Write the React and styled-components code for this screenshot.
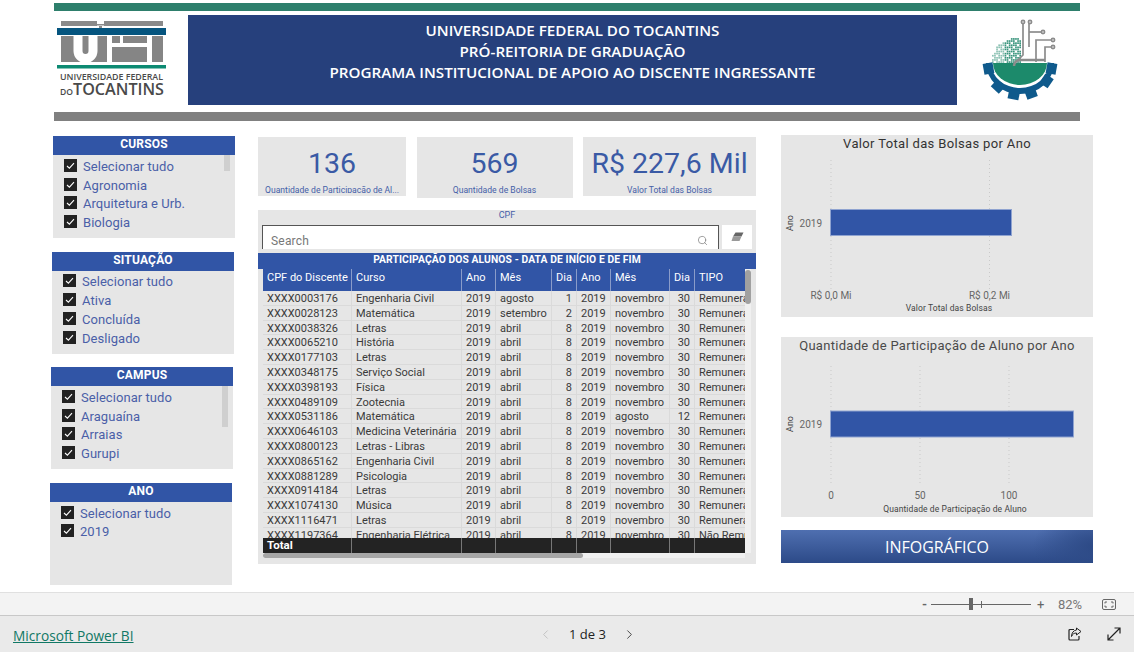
import React from "react";
import styled, { createGlobalStyle } from "styled-components";
import { ChevronLeft, ChevronRight, Search } from "lucide-react";

const BLUE = "#3155a6";
const PANEL = "#e6e6e6";

const rows = [
  ["XXXX0003176", "Engenharia Civil", "agosto", 1],
  ["XXXX0028123", "Matemática", "setembro", 2],
  ["XXXX0038326", "Letras"],
  ["XXXX0065210", "História"],
  ["XXXX0177103", "Letras"],
  ["XXXX0348175", "Serviço Social"],
  ["XXXX0398193", "Física"],
  ["XXXX0489109", "Zootecnia"],
  ["XXXX0531186", "Matemática", "abril", 8, "agosto", 12],
  ["XXXX0646103", "Medicina Veterinária"],
  ["XXXX0800123", "Letras - Libras"],
  ["XXXX0865162", "Engenharia Civil"],
  ["XXXX0881289", "Psicologia"],
  ["XXXX0914184", "Letras"],
  ["XXXX1074130", "Música"],
  ["XXXX1116471", "Letras"],
  ["XXXX1197364", "Engenharia Elétrica", "abril", 8, "novembro", 30, "Não Remunerada"],
];

const slicers = [
  { title: "CURSOS", offset: 3, items: ["Selecionar tudo", "Agronomia", "Arquitetura e Urb.", "Biologia"], thumb: { top: 19, left: 171, height: 16 } },
  { title: "SITUAÇÃO", offset: 2, items: ["Selecionar tudo", "Ativa", "Concluída", "Desligado"] },
  { title: "CAMPUS", offset: 1, items: ["Selecionar tudo", "Araguaína", "Arraias", "Gurupi"], thumb: { top: 19, left: 171, height: 41 } },
  { title: "ANO", offset: 0, items: ["Selecionar tudo", "2019"] },
];

const UftLogo = () => (
  <svg width="112" height="84" viewBox="56 18 112 84">
    <rect x="61" y="21" width="36" height="5" fill="#8a8a8a" />
    <rect x="104" y="21" width="59" height="5" fill="#8a8a8a" />
    <rect x="97" y="24" width="7" height="1.500" fill="#8a8a8a" />
    <rect x="99" y="26" width="3" height="2" fill="#8a8a8a" />
    <rect x="57" y="28" width="109" height="7" fill="#05557f" />
    <rect x="61" y="36" width="102" height="26" fill="#858585" />
    <path d="M78 36v15a7.500 7.500 0 0 0 15 0V36" fill="none" stroke="#fff" strokeWidth="9" />
    <rect x="107" y="36" width="5" height="26" fill="#fff" />
    <rect x="112" y="43" width="25" height="4" fill="#fff" />
    <rect x="120" y="36" width="3" height="7" fill="#fff" />
    <rect x="137" y="43" width="15" height="4" fill="#fff" />
    <rect x="147" y="36" width="5" height="26" fill="#fff" />
    <rect x="57" y="65" width="109" height="3.500" fill="#0c8a72" />
    <text x="60" y="80" fontFamily="Open Sans, sans-serif" fontSize="9" fontWeight="600" fill="#4a4a4a" textLength="103" lengthAdjust="spacingAndGlyphs">UNIVERSIDADE FEDERAL</text>
    <text x="60" y="95" fontFamily="Open Sans, sans-serif" fontSize="9" fontWeight="600" fill="#4a4a4a" textLength="13" lengthAdjust="spacingAndGlyphs">DO</text>
    <text x="73" y="95" fontFamily="Open Sans, sans-serif" fontSize="16.5" fontWeight="600" fill="#4a4a4a" textLength="91" lengthAdjust="spacingAndGlyphs">TOCANTINS</text>
  </svg>
);

const gearTeeth = [-80, -43, -11, 20, 56, 80];
const pixelDots = [];
for (let r = 0; r < 13; r++) {
  for (let c = 0; c < 14; c++) {
    const x = 992 + c * 2.1;
    const y = 36 + r * 2.1;
    const inside = (x - 1017) ** 2 + (y - 62) ** 2 < 26 * 26;
    if (inside && (r * 7 + c * 11) % 5 !== 0) pixelDots.push([x, y]);
  }
}

const SealLogo = () => (
  <svg width="90" height="90" viewBox="975 15 90 90">
    {pixelDots.map(([x, y], i) => (
      <rect key={i} x={x} y={y} width="1.700" height="1.700" fill="#2f8f76" opacity={x > 1004 ? 0.95 : 0.55} />
    ))}
    <path d="M986 63a34 31 0 0 0 68 0h-5a29 25 0 0 1-58 0z" fill="#0f5a8c" />
    {gearTeeth.map((a) => (
      <rect key={a} x="1014.500" y="90" width="11" height="10" fill="#0f5a8c" transform={`rotate(${-a} 1020 63)`} />
    ))}
    <path d="M993 63a27 22 0 0 0 54 0z" fill="#1c8a6b" />
    <g fill="none" stroke="#8c8c8c" strokeWidth="1.700">
      <path d="M1023 23v32l-5 5" />
      <path d="M1029 23v24" />
      <path d="M1029 32h14" />
      <path d="M1036 62V40h15" />
      <path d="M1045 62V47h6" />
      <path d="M1045 60h-25a6 6 0 0 0-6 6" strokeWidth="2.500" />
      <circle cx="1023" cy="22" r="1.600" fill="#fff" />
      <circle cx="1030" cy="22" r="1.600" fill="#fff" />
      <circle cx="1043" cy="32" r="1.600" fill="#fff" />
      <circle cx="1053" cy="40" r="1.600" fill="#fff" />
      <circle cx="1053" cy="47" r="1.600" fill="#fff" />
    </g>
  </svg>
);

const CheckMark = () => (
  <svg width="13" height="13" viewBox="0 0 13 13">
    <rect width="13" height="13" fill="#222" />
    <path d="M3 7l2.400 2.200L10 4.200" fill="none" stroke="#fff" strokeWidth="1.100" />
  </svg>
);

const Slicer = ({ title, items, offset, thumb }) => (
  <SlicerBox offset={offset}>
    <SlicerTitle>{title}</SlicerTitle>
    <SlicerList>
      {items.map((item) => (
        <SlicerItem key={item}>
          <CheckMark />
          <span>{item}</span>
        </SlicerItem>
      ))}
    </SlicerList>
    {thumb && <SlicerThumb $top={thumb.top} $left={thumb.left} $height={thumb.height} />}
  </SlicerBox>
);

const Eraser = () => (
  <svg width="13" height="10" viewBox="0 0 13 10">
    <path d="M4.500 0.500H12.500L10.500 4.500H2z" fill="#666" />
    <path d="M2 4.500H10.500L8.500 9H0.500z" fill="#999" />
  </svg>
);

const TableRow = ({ row }) => {
  const [cpf, curso, mes = "abril", dia = 8, mesFim = "novembro", diaFim = 30, tipo = "Remunerada"] = row;
  return (
    <DataRow>
      <Cell>{cpf}</Cell>
      <Cell>{curso}</Cell>
      <Cell>2019</Cell>
      <Cell>{mes}</Cell>
      <Cell $right>{dia}</Cell>
      <Cell>2019</Cell>
      <Cell>{mesFim}</Cell>
      <Cell $right>{diaFim}</Cell>
      <Cell>{tipo}</Cell>
    </DataRow>
  );
};

const ChartText = styled.text`
  font-family: Roboto, sans-serif;
  font-size: ${(props) => props.$size || 10}px;
  fill: ${(props) => props.$color || "#666"};
`;

const BarChart = ({ viewBox, height, grid, gridY, bar, ticks, axisTitle, axisX, labelY, tickY, titleY }) => (
  <svg width="312" height={height} viewBox={viewBox}>
    {grid.map((x) => (
      <line key={x} x1={x} x2={x} y1={gridY[0]} y2={gridY[1]} stroke="#c9c9c9" strokeDasharray="1 3" />
    ))}
    <rect x="49.5" y={bar.y} width={bar.w} height="26" fill={BLUE} stroke="#8fa3d0" />
    <ChartText x="41" y={labelY} textAnchor="end">2019</ChartText>
    <ChartText $size={9} $color="#444" transform={`translate(12 ${labelY - 4}) rotate(-90)`} textAnchor="middle">Ano</ChartText>
    {ticks.map(([x, label]) => (
      <ChartText key={label} x={x} y={tickY} textAnchor="middle">{label}</ChartText>
    ))}
    <ChartText $size={8.5} $color="#444" x={axisX} y={titleY} textAnchor="middle" letterSpacing="0.1">{axisTitle}</ChartText>
  </svg>
);

export default function App() {
  return (
    <>
      <GlobalStyle />
      <Page>
        <Canvas>
          <Header>
            <TopBar />
            <HeaderRow>
              <LogoSlot><UftLogo /></LogoSlot>
              <Banner>
                <div>UNIVERSIDADE FEDERAL DO TOCANTINS</div>
                <div>PRÓ-REITORIA DE GRADUAÇÃO</div>
                <div>PROGRAMA INSTITUCIONAL DE APOIO AO DISCENTE INGRESSANTE</div>
              </Banner>
              <SealSlot><SealLogo /></SealSlot>
            </HeaderRow>
            <GrayBar />
          </Header>

          <Body>
            <LeftColumn>
              {slicers.map((s) => <Slicer key={s.title} {...s} />)}
            </LeftColumn>

            <MiddleColumn>
              <Cards>
                <Card $width={148} $height={59}>
                  <CardValue>136</CardValue>
                  <CardLabel $clip>Quantidade de Participação de Al...</CardLabel>
                </Card>
                <Card $width={156} $height={61}>
                  <CardValue>569</CardValue>
                  <CardLabel>Quantidade de Bolsas</CardLabel>
                </Card>
                <Card $width={173} $height={59}>
                  <CardValue>R$ 227,6 Mil</CardValue>
                  <CardLabel $clip>Valor Total das Bolsas</CardLabel>
                </Card>
              </Cards>

              <TablePanel>
                <CpfLabel>CPF</CpfLabel>
                <SearchRow>
                  <SearchBox>
                    <span>Search</span>
                    <Search size={11} strokeWidth={1.5} color="#777" />
                  </SearchBox>
                  <EraserBox><Eraser /></EraserBox>
                </SearchRow>
                <TableTitle>PARTICIPAÇÃO DOS ALUNOS - DATA DE INÍCIO E DE FIM</TableTitle>
                <TableWrap>
                  <HeaderGrid>
                    <HeadCell>CPF do Discente</HeadCell>
                    <HeadCell>Curso</HeadCell>
                    <HeadCell>Ano</HeadCell>
                    <HeadCell>Mês</HeadCell>
                    <HeadCell>Dia</HeadCell>
                    <HeadCell>Ano</HeadCell>
                    <HeadCell>Mês</HeadCell>
                    <HeadCell>Dia</HeadCell>
                    <HeadCell>TIPO</HeadCell>
                  </HeaderGrid>
                  <TableBody>
                    {rows.map((row) => <TableRow key={row[0]} row={row} />)}
                  </TableBody>
                  <TotalGrid>
                    <TotalCell>Total</TotalCell>
                    {Array.from({ length: 8 }).map((_, i) => <TotalCell key={i} />)}
                  </TotalGrid>
                  <HScroll><HThumb /></HScroll>
                  <VScroll><VThumb /></VScroll>
                </TableWrap>
              </TablePanel>
            </MiddleColumn>

            <RightColumn>
              <ChartPanel $height={182}>
                <ChartTitle>Valor Total das Bolsas por Ano</ChartTitle>
                <BarChart
                  viewBox="0 18 312 164"
                  height={164}
                  grid={[50, 208.5]}
                  gridY={[25, 155]}
                  bar={{ y: 74.5, w: 181 }}
                  ticks={[[50, "R$ 0,0 Mi"], [208.5, "R$ 0,2 Mi"]]}
                  axisTitle="Valor Total das Bolsas"
                  axisX={168}
                  labelY={92}
                  tickY={164}
                  titleY={176}
                />
              </ChartPanel>
              <ChartPanel $height={180} $top={20}>
                <ChartTitle $soft>Quantidade de Participação de Aluno por Ano</ChartTitle>
                <BarChart
                  viewBox="0 18 312 162"
                  height={162}
                  grid={[50, 139, 228]}
                  gridY={[29, 148]}
                  bar={{ y: 74, w: 243 }}
                  ticks={[[50, "0"], [139, "50"], [228, "100"]]}
                  axisTitle="Quantidade de Participação de Aluno"
                  axisX={174}
                  labelY={91}
                  tickY={162}
                  titleY={175}
                />
              </ChartPanel>
              <InfoButton>INFOGRÁFICO</InfoButton>
            </RightColumn>
          </Body>
        </Canvas>

        <ZoomBar>
          <ZoomSign>-</ZoomSign>
          <ZoomTrack><ZoomTick /><ZoomThumb /></ZoomTrack>
          <ZoomSign $plus>+</ZoomSign>
          <ZoomValue>82%</ZoomValue>
          <svg width="14" height="11" viewBox="0 0 14 11">
            <rect x="0.5" y="0.5" width="13" height="10" rx="1.5" fill="none" stroke="#666" />
            <path d="M3 4.5V3h2M9 3h2v1.5M11 6.5V8H9M5 8H3V6.5" fill="none" stroke="#666" />
          </svg>
        </ZoomBar>

        <Footer>
          <PowerBiLink>Microsoft Power BI</PowerBiLink>
          <Pager>
            <ChevronLeft size={15} strokeWidth={1.2} color="#b5b5b5" />
            <PageText>1 de 3</PageText>
            <ChevronRight size={15} strokeWidth={1.4} color="#333" />
          </Pager>
          <FooterIcons>
            <svg width="14" height="14" viewBox="0 0 14 14">
              <path d="M6 2.5H2A1 1 0 0 0 1 3.500v8.500a1 1 0 0 0 1 1h8a1 1 0 0 0 1-1V9" fill="none" stroke="#222" strokeWidth="1.2" />
              <path d="M8.500 1l4.500 3.500L8.500 8V6C6 6 4.500 7 3.500 9.500 3.500 6 5.500 3.300 8.500 3z" fill="none" stroke="#222" />
            </svg>
            <svg width="14" height="14" viewBox="0 0 14 14">
              <path d="M1 13L13 1M7.500 1H13V6.500M1 7.500V13H6.500" fill="none" stroke="#222" strokeWidth="1.2" />
            </svg>
          </FooterIcons>
        </Footer>
      </Page>
    </>
  );
}

const GlobalStyle = createGlobalStyle`
  html, body { margin: 0; padding: 0; background: #fff; }
  body { font-family: Roboto, "Liberation Sans", sans-serif; overflow: hidden; }
  * { box-sizing: border-box; }
`;
const Page = styled.div`
  width: 1134px;
  height: 652px;
  display: flex;
  flex-direction: column;
`;
const Canvas = styled.main`
  height: 592px;
  padding-top: 3px;
`;
const Header = styled.header`
  width: 1026px;
  margin-left: 54px;
`;
const TopBar = styled.div`
  height: 8px;
  background: #2e7f6c;
`;
const HeaderRow = styled.div`
  display: flex;
  margin-top: 4px;
  height: 90px;
`;
const LogoSlot = styled.div`
  width: 134px;
  padding: 3px 0 0 2px;
`;
const Banner = styled.div`
  width: 769px;
  background: #26407c;
  color: #fff;
  font-family: "Open Sans", sans-serif;
  font-weight: 600;
  font-size: 15.2px;
  line-height: 21px;
  text-align: center;
  padding-top: 5px;
  white-space: nowrap;
`;
const SealSlot = styled.div`
  margin-left: 18px;
`;
const GrayBar = styled.div`
  height: 9px;
  margin-top: 7px;
  background: #808080;
`;
const Body = styled.div`
  display: grid;
  grid-template-columns: 185px 498px 312px;
  column-gap: 23px;
  margin: 14px 0 0 50px;
`;
const LeftColumn = styled.div`
  display: flex;
  flex-direction: column;
  gap: 13.6px;
  padding-top: 1px;
`;
const SlicerBox = styled.section`
  position: relative;
  width: 182px;
  height: 102px;
  margin-left: ${(props) => props.offset}px;
  background: ${PANEL};
`;
const SlicerTitle = styled.h3`
  margin: 0;
  height: 19px;
  background: ${BLUE};
  color: #fff;
  font-size: 12px;
  font-weight: 700;
  line-height: 17px;
  text-align: center;
  letter-spacing: 0.2px;
`;
const SlicerList = styled.div`
  padding: 2px 0 0 11px;
`;
const SlicerItem = styled.div`
  display: flex;
  align-items: center;
  gap: 6px;
  height: 18.7px;
  font-size: 13px;
  color: #4a5fa8;
  letter-spacing: 0.05px;
  svg { flex: none; margin-top: -2px; }
`;
const SlicerThumb = styled.div`
  position: absolute;
  top: ${(props) => props.$top}px;
  left: ${(props) => props.$left}px;
  width: 6px;
  height: ${(props) => props.$height}px;
  background: #cfcfcf;
`;
const MiddleColumn = styled.div`
  padding-top: 2px;
`;
const Cards = styled.div`
  display: flex;
  align-items: flex-start;
  gap: 10.5px;
  height: 61px;
`;
const Card = styled.div`
  width: ${(props) => props.$width}px;
  height: ${(props) => props.$height}px;
  background: ${PANEL};
  text-align: center;
  overflow: hidden;
  padding-top: 9px;
`;
const CardValue = styled.div`
  font-size: 28.5px;
  line-height: 36px;
  color: #3a5aa5;
  white-space: nowrap;
`;
const CardLabel = styled.div`
  font-size: 8.6px;
  line-height: 11px;
  height: ${(props) => (props.$clip ? 8 : 11)}px;
  overflow: hidden;
  margin-top: 3px;
  color: #4560a8;
  white-space: nowrap;
`;
const TablePanel = styled.section`
  margin-top: 12px;
  height: 354px;
  background: ${PANEL};
`;
const CpfLabel = styled.div`
  height: 15px;
  font-size: 9px;
  line-height: 11px;
  text-align: center;
  color: #4560a8;
`;
const SearchRow = styled.div`
  display: flex;
  gap: 3px;
  height: 24px;
  padding-left: 4px;
`;
const SearchBox = styled.div`
  flex: none;
  width: 457px;
  display: flex;
  align-items: flex-end;
  justify-content: space-between;
  padding: 0 10px 1px 8px;
  background: #fff;
  border: 1px solid #555;
  border-bottom: none;
  color: #777;
  font-size: 12px;
  letter-spacing: 0.2px;
  svg { margin-bottom: 2px; }
`;
const EraserBox = styled.div`
  width: 30px;
  background: #fff;
  display: flex;
  align-items: center;
  justify-content: center;
`;
const TableTitle = styled.div`
  margin-top: 4px;
  height: 16px;
  background: ${BLUE};
  color: #fff;
  font-size: 10.3px;
  font-weight: 700;
  line-height: 14px;
  text-align: center;
  letter-spacing: 0.1px;
`;
const TableWrap = styled.div`
  position: relative;
  width: 488px;
  padding-left: 5px;
`;
const columns = "88px 109px 33px 55px 24px 33px 58px 24px 50px";
const HeaderGrid = styled.div`
  display: grid;
  grid-template-columns: ${columns};
  column-gap: 1px;
  width: 482px;
  height: 22px;
  background: #8a9cc9;
`;
const HeadCell = styled.div`
  background: ${BLUE};
  color: #fff;
  font-size: 11px;
  line-height: 18px;
  padding-left: 4px;
  white-space: nowrap;
`;
const TableBody = styled.div`
  width: 482px;
  height: 247px;
  overflow: hidden;
`;
const DataRow = styled.div`
  display: grid;
  grid-template-columns: ${columns};
  column-gap: 1px;
  height: 14.8px;
  background: #dadada;
  padding-bottom: 1px;
`;
const Cell = styled.div`
  background: ${PANEL};
  color: #3a3a3a;
  font-size: 11px;
  line-height: 14px;
  padding: 1px 4px 0;
  overflow: hidden;
  white-space: nowrap;
  text-align: ${(props) => (props.$right ? "right" : "left")};
  &:last-child { padding-right: 0; }
`;
const TotalGrid = styled.div`
  display: grid;
  grid-template-columns: ${columns};
  column-gap: 1px;
  width: 482px;
  height: 15px;
  background: #777;
`;
const TotalCell = styled.div`
  background: #232323;
  color: #fff;
  font-size: 11.5px;
  font-weight: 700;
  line-height: 15px;
  padding-left: 4px;
`;
const HScroll = styled.div`
  width: 482px;
  height: 5px;
  background: #f0f0f0;
`;
const HThumb = styled.div`
  width: 320px;
  height: 5px;
  border-radius: 3px;
  background: #a6a6a6;
`;
const VScroll = styled.div`
  position: absolute;
  top: 0;
  left: 487px;
  width: 6px;
  height: 284px;
  background: #f0f0f0;
`;
const VThumb = styled.div`
  width: 6px;
  height: 34px;
  margin-top: 1px;
  border-radius: 3px;
  background: #a0a0a0;
`;
const RightColumn = styled.div`
  margin-left: 2px;
  width: 312px;
`;
const ChartPanel = styled.section`
  height: ${(props) => props.$height}px;
  margin-top: ${(props) => props.$top || 0}px;
  background: ${PANEL};
`;
const ChartTitle = styled.h4`
  margin: 0;
  height: 18px;
  font-size: 13px;
  font-weight: 400;
  line-height: 17px;
  letter-spacing: ${(props) => (props.$soft ? 0.3 : 0.35)}px;
  text-align: center;
  color: ${(props) => (props.$soft ? "#4a4a4a" : "#333")};
  white-space: nowrap;
`;
const InfoButton = styled.button`
  display: block;
  width: 312px;
  height: 33px;
  margin-top: 13px;
  padding-top: 2px;
  border: none;
  background:
    radial-gradient(ellipse 60px 40px at 100% 50%, #2d4a86 0%, rgba(45, 74, 134, 0) 100%),
    linear-gradient(180deg, #4f6fb0 0%, #2c4a88 100%);
  color: #fff;
  font-family: "Open Sans", sans-serif;
  font-size: 16px;
`;
const ZoomBar = styled.div`
  height: 24px;
  background: #f3f3f3;
  border-top: 1px solid #e0e0e0;
  border-bottom: 1px solid #c8c8c8;
  display: flex;
  align-items: center;
  padding-left: 922px;
  color: #666;
`;
const ZoomSign = styled.span`
  width: 9px;
  font-size: 13px;
  font-weight: ${(props) => (props.$plus ? 400 : 700)};
  margin-left: ${(props) => (props.$plus ? 6 : 0)}px;
  line-height: 1;
`;
const ZoomTrack = styled.div`
  position: relative;
  width: 100px;
  height: 1px;
  background: #666;
`;
const ZoomThumb = styled.div`
  position: absolute;
  left: 38px;
  top: -6px;
  width: 4px;
  height: 12px;
  background: #666;
`;
const ZoomTick = styled.div`
  position: absolute;
  left: 50px;
  top: -3px;
  width: 1px;
  height: 7px;
  background: #666;
`;
const ZoomValue = styled.span`
  margin: 0 21px 0 12px;
  width: 23px;
  font-size: 13px;
  color: #777;
  white-space: nowrap;
`;
const Footer = styled.footer`
  flex: 1;
  background: #eaeaea;
  display: grid;
  grid-template-columns: 525px 1fr auto;
  align-items: center;
  padding: 0 13px;
`;
const PowerBiLink = styled.a`
  font-family: "Open Sans", sans-serif;
  font-size: 13.7px;
  color: #117865;
  text-decoration: underline;
  padding-top: 2px;
`;
const Pager = styled.nav`
  display: flex;
  align-items: center;
  gap: 16px;
`;
const PageText = styled.span`
  font-family: "Open Sans", sans-serif;
  font-size: 13px;
  color: #222;
`;
const FooterIcons = styled.div`
  display: flex;
  gap: 25px;
  svg { display: block; }
`;
